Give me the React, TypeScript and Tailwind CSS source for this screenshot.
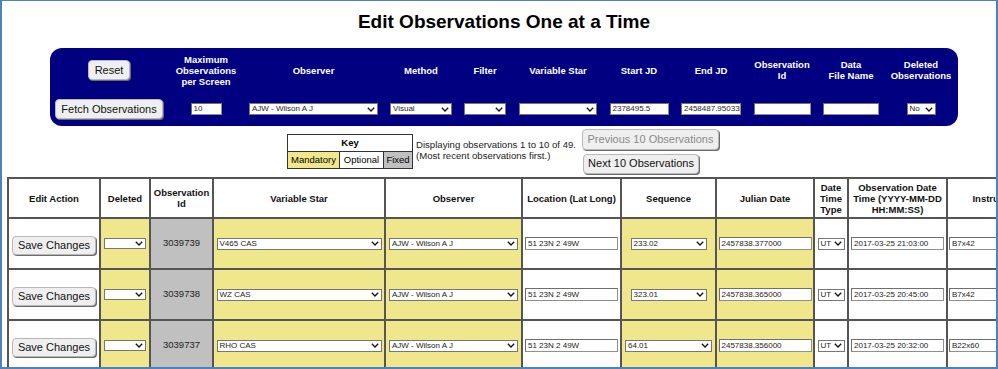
import React from "react";

function Chevron() {
  return (
    <svg width="8" height="5" viewBox="0 0 8 5" className="shrink-0">
      <polyline points="0.8,0.8 4,4 7.2,0.8" fill="none" stroke="#111" strokeWidth="1.3" />
    </svg>
  );
}

function Sel({ w, v, h = "h-[12px]" }: { w: string; v?: string; h?: string }) {
  return (
    <div
      className={`${w} ${h} flex items-center justify-between bg-white border border-[#767676] pl-[2px] pr-[2px] text-[8px] leading-none text-[#222] overflow-hidden`}
    >
      <span className="whitespace-nowrap">{v ?? ""}</span>
      <Chevron />
    </div>
  );
}

function Inp({ w, v, h = "h-[12px]" }: { w: string; v?: string; h?: string }) {
  return (
    <div
      className={`${w} ${h} flex items-center bg-white border border-[#8f8f8f] border-t-[#6f6f6f] border-l-[#6f6f6f] pl-[2px] text-[8px] leading-none text-[#222] overflow-hidden whitespace-nowrap`}
    >
      {v ?? ""}
    </div>
  );
}

function Btn({ children, cls, disabled }: { children: React.ReactNode; cls: string; disabled?: boolean }) {
  return (
    <div
      className={`${cls} flex items-center justify-center bg-[#efefef] border border-[#b8b8b8] rounded-[4px] shadow-[1px_1px_0_#6b6b6b] text-[11px] leading-none whitespace-nowrap ${
        disabled ? "text-[#8a8a8a]" : "text-[#111]"
      }`}
    >
      {children}
    </div>
  );
}

const rows = [
  { id: "3039739", star: "V465 CAS", seq: "233.02", seqW: "w-[76px]", jd: "2457838.377000", dt: "2017-03-25 21:03:00", inst: "B7x42" },
  { id: "3039738", star: "WZ CAS", seq: "323.01", seqW: "w-[76px]", jd: "2457838.365000", dt: "2017-03-25 20:45:00", inst: "B7x42" },
  { id: "3039737", star: "RHO CAS", seq: "64.01", seqW: "w-[87px]", jd: "2457838.356000", dt: "2017-03-25 20:32:00", inst: "B22x60" },
];

const hd = "border-r-2 border-b-2 border-[#555] flex items-center justify-center text-center font-bold text-[9.5px] leading-[11px] text-[#111] px-[2px]";
const cell = "border-r-2 border-b-2 border-[#555] flex items-center justify-center";

export default function App() {
  return (
    <div className="w-[998px] h-[369px] overflow-hidden border-t border-l-2 border-r-2 border-b-2 border-[#4f81bd] bg-white font-['Liberation_Sans',Arial,sans-serif] text-black">
      <h1 className="pt-[10px] pl-[10px] text-center text-[19px] leading-[22px] font-bold">
        Edit Observations One at a Time
      </h1>

      <div className="ml-[48px] mt-[15px] w-[908px] h-[78px] bg-[#000080] rounded-[12px] grid grid-cols-[118px_76px_139px_76px_52px_94px_68px_76px_66px_72px_68px] grid-rows-[44px_34px] text-white">
        <div className="flex items-center justify-center">
          <Btn cls="w-[42px] h-[20px]">Reset</Btn>
        </div>
        {[
          ["Maximum", "Observations", "per Screen"],
          ["Observer"],
          ["Method"],
          ["Filter"],
          ["Variable Star"],
          ["Start JD"],
          ["End JD"],
          ["Observation", "Id"],
          ["Data", "File Name"],
          ["Deleted", "Observations"],
        ].map((lines, i) => (
          <div key={i} className="flex flex-col items-center justify-center text-center font-bold text-[9.5px] leading-[11px]">
            {lines.map((l, j) => (
              <span key={j} className="whitespace-nowrap">{l}</span>
            ))}
          </div>
        ))}

        <div className="flex items-center justify-center">
          <Btn cls="w-[108px] h-[20px]">Fetch Observations</Btn>
        </div>
        <div className="flex items-center justify-center">
          <Inp w="w-[31px]" v="10" />
        </div>
        <div className="flex items-center justify-center">
          <Sel w="w-[129px]" v="AJW - Wilson A J" />
        </div>
        <div className="flex items-center justify-center">
          <Sel w="w-[62px]" v="Visual" />
        </div>
        <div className="flex items-center justify-center">
          <Sel w="w-[42px]" />
        </div>
        <div className="flex items-center justify-center">
          <Sel w="w-[78px]" />
        </div>
        <div className="flex items-center justify-center">
          <Inp w="w-[59px]" v="2378495.5" />
        </div>
        <div className="flex items-center justify-center">
          <Inp w="w-[60px]" v="2458487.950335" />
        </div>
        <div className="flex items-center justify-center">
          <Inp w="w-[57px]" />
        </div>
        <div className="flex items-center justify-center">
          <Inp w="w-[56px]" />
        </div>
        <div className="flex items-center justify-center">
          <Sel w="w-[29px]" v="No" />
        </div>
      </div>

      <div className="ml-[285px] mt-[2px] h-[46px] flex items-center">
        <div className="w-[126px] border border-[#333] text-[9.5px] leading-none">
          <div className="h-[17px] flex items-center justify-center font-bold border-b border-[#333]">Key</div>
          <div className="h-[16px] flex">
            <div className="w-[52px] bg-[#f0e68c] flex items-center justify-center border-r border-[#333]">Mandatory</div>
            <div className="w-[44px] bg-white flex items-center justify-center border-r border-[#333]">Optional</div>
            <div className="flex-1 bg-[#c0c0c0] flex items-center justify-center">Fixed</div>
          </div>
        </div>
        <div className="ml-[3px] w-[163px] text-[9.6px] leading-[10.5px] text-[#222] -mt-[1px]">
          <div className="whitespace-nowrap">Displaying observations 1 to 10 of 49.</div>
          <div className="whitespace-nowrap">(Most recent observations first.)</div>
        </div>
        <div className="ml-[3px] flex flex-col gap-[4px]">
          <Btn cls="w-[137px] h-[21px]" disabled>
            Previous 10 Observations
          </Btn>
          <Btn cls="w-[116px] h-[20px] ml-[1px]">Next 10 Observations</Btn>
        </div>
      </div>

      <div className="ml-[5px] mt-[3px] w-max grid grid-cols-[92px_50px_63px_172px_137px_99px_95px_98px_34px_99px_100px] grid-rows-[40px_51px_51px_51px] border-l-2 border-t-2 border-[#555]">
        <div className={hd}>Edit Action</div>
        <div className={hd}>Deleted</div>
        <div className={hd}>
          Observation
          <br />
          Id
        </div>
        <div className={hd}>Variable Star</div>
        <div className={hd}>Observer</div>
        <div className={hd}>Location (Lat Long)</div>
        <div className={hd}>Sequence</div>
        <div className={hd}>Julian Date</div>
        <div className={hd}>
          Date
          <br />
          Time
          <br />
          Type
        </div>
        <div className={hd}>
          Observation Date
          <br />
          Time (YYYY-MM-DD
          <br />
          HH:MM:SS)
        </div>
        <div className={hd}>Instrument</div>

        {rows.map((r) => (
          <React.Fragment key={r.id}>
            <div className={`${cell} bg-white`}>
              <Btn cls="w-[84px] h-[19px] mt-[3px]">Save Changes</Btn>
            </div>
            <div className={`${cell} bg-[#f0e68c]`}>
              <Sel w="w-[42px]" h="h-[11px]" />
            </div>
            <div className={`${cell} bg-[#c0c0c0] text-[9.5px] text-[#222]`}>{r.id}</div>
            <div className={`${cell} bg-[#f0e68c]`}>
              <Sel w="w-[165px]" v={r.star} />
            </div>
            <div className={`${cell} bg-[#f0e68c]`}>
              <Sel w="w-[129px]" v="AJW - Wilson A J" />
            </div>
            <div className={`${cell} bg-white`}>
              <Inp w="w-[93px]" h="h-[13px]" v="51 23N 2 49W" />
            </div>
            <div className={`${cell} bg-[#f0e68c]`}>
              <Sel w={r.seqW} h="h-[12px]" v={r.seq} />
            </div>
            <div className={`${cell} bg-[#f0e68c]`}>
              <Inp w="w-[93px]" h="h-[13px]" v={r.jd} />
            </div>
            <div className={`${cell} bg-white`}>
              <Sel w="w-[27px]" v="UT" />
            </div>
            <div className={`${cell} bg-white`}>
              <Inp w="w-[93px]" h="h-[13px]" v={r.dt} />
            </div>
            <div className={`${cell} bg-white justify-start pl-[1px]`}>
              <Inp w="w-[93px]" h="h-[13px]" v={r.inst} />
            </div>
          </React.Fragment>
        ))}
      </div>
    </div>
  );
}
